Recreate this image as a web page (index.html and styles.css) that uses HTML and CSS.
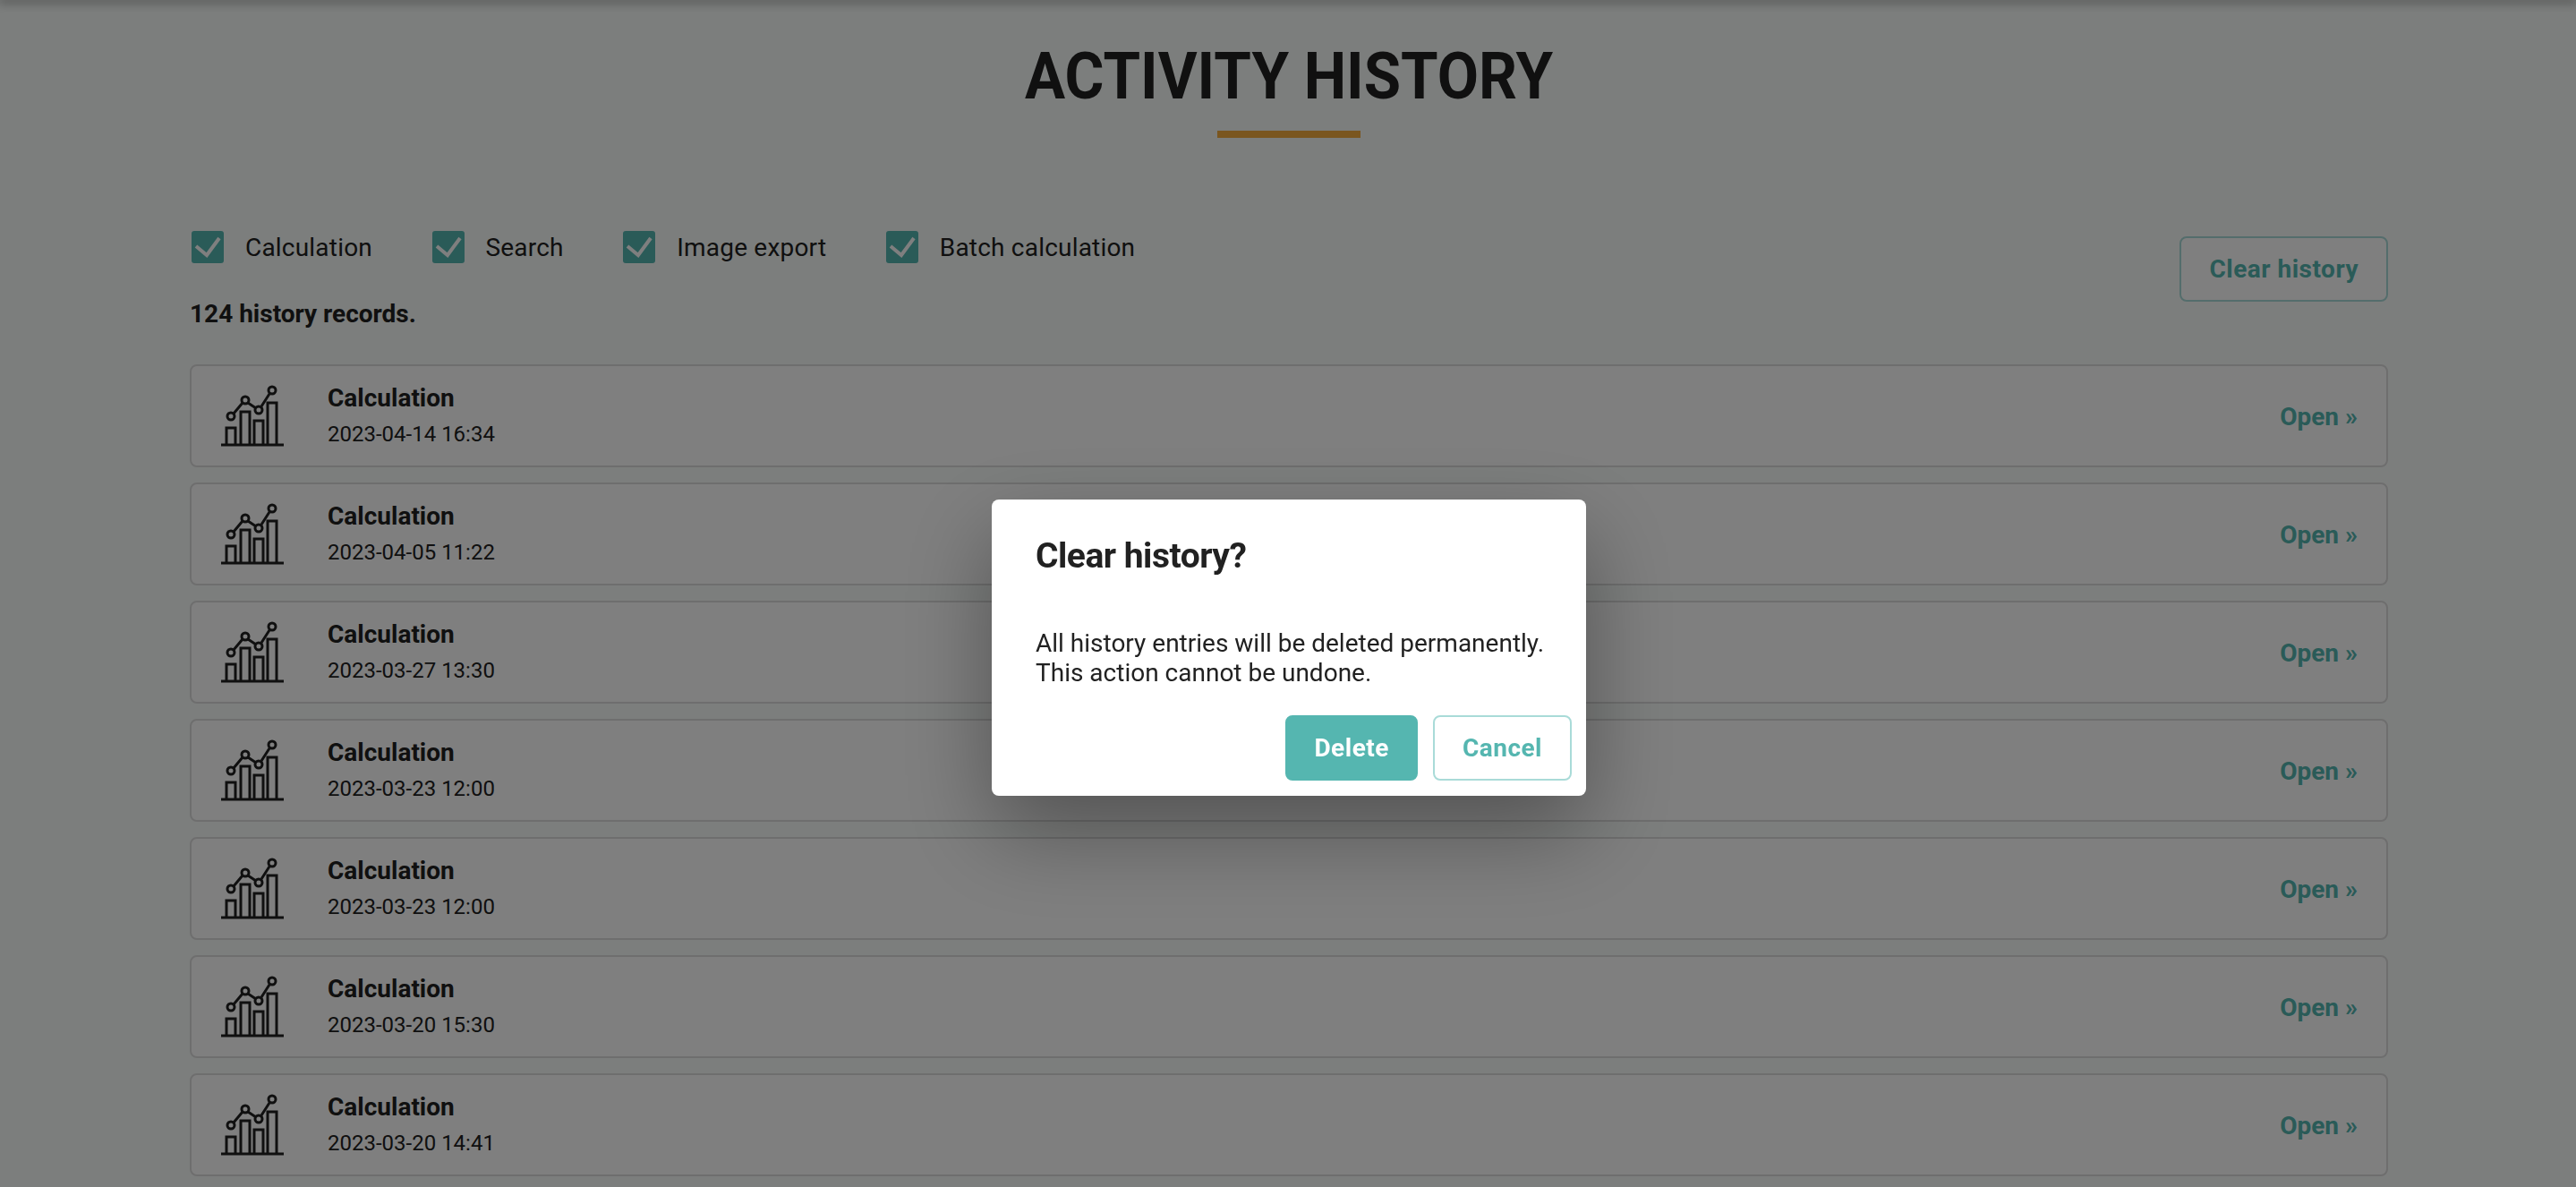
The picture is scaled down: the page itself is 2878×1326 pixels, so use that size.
FILE: index.html
```html
<!DOCTYPE html>
<html lang="en-gb">
<head>
    <meta charset="utf-8">
    <meta content="initial-scale=1, width=device-width" name="viewport">
    <title>Activity history</title>
    <link rel="stylesheet" href="styles.css">
</head>

<body>
    <div class="topbar"></div>
    <main class="page">
        <h1>ACTIVITY HISTORY</h1>
        <div class="rule"></div>

        <div class="toolbar">
            <div>
                <div class="filters">
                    <label class="filter">
                        <svg class="check" viewBox="0 0 36 36"><rect width="36" height="36" rx="3"/><path d="M5 17l12 10L31 8"/></svg>
                        Calculation
                    </label>
                    <label class="filter">
                        <svg class="check" viewBox="0 0 36 36"><rect width="36" height="36" rx="3"/><path d="M5 17l12 10L31 8"/></svg>
                        Search
                    </label>
                    <label class="filter">
                        <svg class="check" viewBox="0 0 36 36"><rect width="36" height="36" rx="3"/><path d="M5 17l12 10L31 8"/></svg>
                        Image export
                    </label>
                    <label class="filter">
                        <svg class="check" viewBox="0 0 36 36"><rect width="36" height="36" rx="3"/><path d="M5 17l12 10L31 8"/></svg>
                        Batch calculation
                    </label>
                </div>
                <p class="count">124 history records.</p>
            </div>
            <button class="btn btn-outline btn-clear">Clear history</button>
        </div>

        <ul class="records">
            <li class="record">
                <svg class="chart" viewBox="0 0 70 70"><use href="#chart-icon"/></svg>
                <div class="record-text"><h3>Calculation</h3><time>2023-04-14 16:34</time></div>
                <a class="open">Open »</a>
            </li>
            <li class="record">
                <svg class="chart" viewBox="0 0 70 70"><use href="#chart-icon"/></svg>
                <div class="record-text"><h3>Calculation</h3><time>2023-04-05 11:22</time></div>
                <a class="open">Open »</a>
            </li>
            <li class="record">
                <svg class="chart" viewBox="0 0 70 70"><use href="#chart-icon"/></svg>
                <div class="record-text"><h3>Calculation</h3><time>2023-03-27 13:30</time></div>
                <a class="open">Open »</a>
            </li>
            <li class="record">
                <svg class="chart" viewBox="0 0 70 70"><use href="#chart-icon"/></svg>
                <div class="record-text"><h3>Calculation</h3><time>2023-03-23 12:00</time></div>
                <a class="open">Open »</a>
            </li>
            <li class="record">
                <svg class="chart" viewBox="0 0 70 70"><use href="#chart-icon"/></svg>
                <div class="record-text"><h3>Calculation</h3><time>2023-03-23 12:00</time></div>
                <a class="open">Open »</a>
            </li>
            <li class="record">
                <svg class="chart" viewBox="0 0 70 70"><use href="#chart-icon"/></svg>
                <div class="record-text"><h3>Calculation</h3><time>2023-03-20 15:30</time></div>
                <a class="open">Open »</a>
            </li>
            <li class="record">
                <svg class="chart" viewBox="0 0 70 70"><use href="#chart-icon"/></svg>
                <div class="record-text"><h3>Calculation</h3><time>2023-03-20 14:41</time></div>
                <a class="open">Open »</a>
            </li>
        </ul>
    </main>

    <svg class="defs" aria-hidden="true">
        <symbol id="chart-icon" viewBox="0 0 70 70">
            <path d="M0 67h70"/>
            <path d="M6 67V48h10v19M22 67V30h10v37M37 67V40h10v27M52 67V20h10v47"/>
            <path d="M14 32l10-12M30 20l9 6M45 24l9-14"/>
            <circle cx="11" cy="35" r="4"/>
            <circle cx="27" cy="17" r="4"/>
            <circle cx="42" cy="28" r="4"/>
            <circle cx="57" cy="6" r="4"/>
        </symbol>
    </svg>

    <div class="overlay"></div>
    <div class="dialog">
        <h2>Clear history?</h2>
        <p>All history entries will be deleted permanently.<br>This action cannot be undone.</p>
        <div class="dialog-actions">
            <button class="btn btn-solid">Delete</button>
            <button class="btn btn-outline">Cancel</button>
        </div>
    </div>
</body>
</html>
```

FILE: styles.css
```css
:root {
    box-sizing: border-box;
    font-size: 100%;
}
:root * {
    box-sizing: inherit;
}
html,
body {
    height: 100%;
    overflow: hidden;
}
body {
    background-color: #F9FDFB;
    color: #212121;
    font-family: Roboto, sans-serif;
    margin: 0;
}
.topbar {
    box-shadow: 0 0 12px 2px rgba(0, 0, 0, 0.6);
    height: 0;
}
.page {
    margin: 0 0 0 212px;
    width: 2456px;
}
h1 {
    font-size: 73px;
    font-weight: 700;
    line-height: 84px;
    margin: 0;
    padding: 43px 0 0;
    text-align: center;
    transform: scaleX(0.92);
}
.rule {
    background-color: #F5AD3F;
    height: 8px;
    margin: 19px auto 0;
    width: 160px;
}
.toolbar {
    align-items: flex-start;
    display: flex;
    justify-content: space-between;
    margin: 104px 0 0;
}
.filters {
    display: flex;
    gap: 66.5px;
    padding-left: 2px;
}
.filter {
    align-items: center;
    display: flex;
    font-size: 28px;
    gap: 24px;
    height: 36px;
    letter-spacing: 0.2px;
}
.check {
    height: 36px;
    width: 36px;
}
.check rect {
    fill: #55B6B0;
}
.check path {
    fill: none;
    stroke: #FFF;
    stroke-width: 4;
}
.count {
    font-size: 28px;
    font-weight: 700;
    line-height: 36px;
    margin: 39px 0 0;
}
.btn {
    border-radius: 8px;
    font-family: Roboto, sans-serif;
    font-size: 28px;
    font-weight: 700;
    height: 73px;
    letter-spacing: 0.5px;
    padding: 0 31px;
}
.btn-solid {
    background-color: #55B6B0;
    border: 2px solid #55B6B0;
    color: #FFF;
    padding: 0 30px;
}
.btn-outline {
    background-color: #FFF;
    border: 2px solid #A9DBD8;
    color: #55B6B0;
}
.btn-clear {
    margin-top: 6px;
}
.records {
    display: flex;
    flex-direction: column;
    gap: 17px;
    list-style: none;
    margin: 38px 0 0;
    padding: 0;
}
.record {
    align-items: center;
    background-color: #FFF;
    border: 2px solid #DCDCDC;
    border-radius: 8px;
    display: flex;
    height: 115px;
    padding: 1px 32px 0 33px;
}
.chart {
    fill: none;
    flex: none;
    height: 70px;
    stroke: #212121;
    stroke-width: 3;
    width: 70px;
}
.defs {
    display: none;
}
.record-text {
    flex: 1;
    margin-left: 49px;
}
.record-text h3 {
    font-size: 28px;
    font-weight: 700;
    line-height: 36px;
    margin: 0 0 4px;
}
.record-text time {
    display: block;
    font-size: 24px;
    line-height: 36px;
}
.open {
    color: #55B6B0;
    font-size: 28px;
    font-weight: 700;
}
.overlay {
    background-color: rgba(0, 0, 0, 0.5);
    inset: 0;
    position: fixed;
}
.dialog {
    background-color: #FFF;
    border-radius: 8px;
    box-shadow: 0 40px 100px rgba(0, 0, 0, 0.35);
    height: 331px;
    left: 1108px;
    padding: 39px 16px 0 49px;
    position: fixed;
    top: 558px;
    width: 664px;
}
.dialog h2 {
    font-size: 39px;
    font-weight: 700;
    letter-spacing: -0.5px;
    line-height: 48px;
    margin: 0;
}
.dialog p {
    font-size: 28px;
    line-height: 33px;
    margin: 57px 0 0;
}
.dialog-actions {
    display: flex;
    gap: 17px;
    justify-content: flex-end;
    margin-top: 31px;
}
```
